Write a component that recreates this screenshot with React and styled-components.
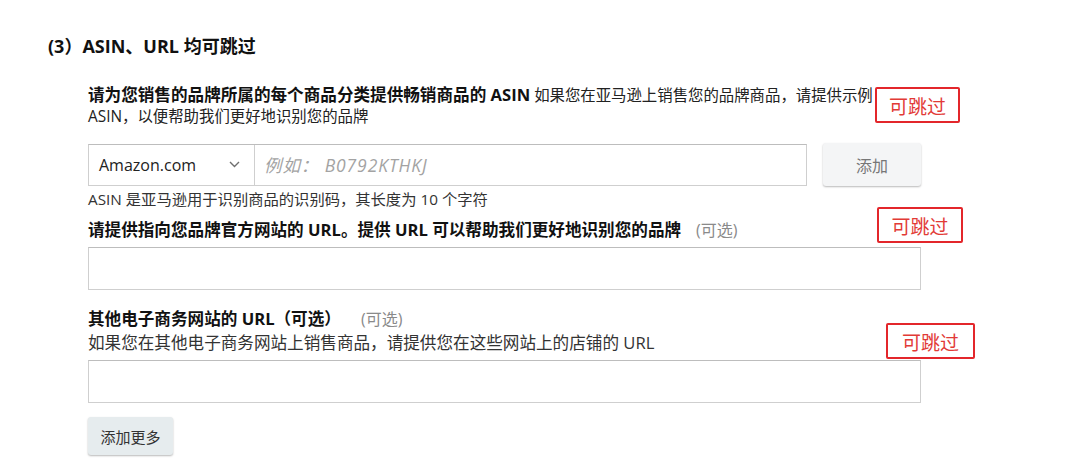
import React from "react";
import styled, { createGlobalStyle } from "styled-components";

const Global = createGlobalStyle`
  html, body { margin: 0; padding: 0; background: #fff; }
  body { font-family: "Open Sans", "Noto Sans CJK SC", sans-serif; color: #111; }
  * { box-sizing: border-box; }
`;

const Page = styled.div`
  padding: 34px 0 0 48px;
  width: 1080px;
  height: 465px;
  overflow: hidden;
`;

const Title = styled.h2`
  margin: 0;
  font-size: 18px;
  line-height: 24px;
  font-weight: 700;
  color: #111;
`;

const Form = styled.div`
  margin: 26px 0 0 40px;
  width: 833px;
  display: flex;
  flex-direction: column;
`;

const Section = styled.div`
  position: relative;
  display: flex;
  flex-direction: column;
  margin-top: ${(p) => p.$mt || 0}px;
`;

const Label = styled.div`
  font-size: ${(p) => p.$fs || 15.4}px;
  line-height: ${(p) => p.$lh || 22}px;
  color: #222;
  strong { font-weight: 700; color: #111; font-size: 16.6px; }
`;

const Optional = styled.span`
  color: #8a8a8a;
  font-size: 16px;
  margin-left: ${(p) => p.$ml}px;
`;

const Sub = styled.div`
  font-size: 16.6px;
  line-height: 23px;
  color: #333;
`;

const Helper = styled.div`
  margin-top: 3px;
  font-size: 15.3px;
  line-height: 20px;
  color: #333;
`;

const Row = styled.div`
  display: flex;
  align-items: center;
  margin-top: ${(p) => p.$mt}px;
`;

const Group = styled.div`
  display: flex;
  width: 720px;
  height: 42px;
  border: 1px solid #cfcfcf;
  border-top-color: #bdbdbd;
  background: #fff;
`;

const Select = styled.div`
  width: 166px;
  display: flex;
  align-items: center;
  justify-content: space-between;
  padding: 0 14px 0 10px;
  border-right: 1px solid #cfcfcf;
  font-size: 16px;
  color: #222;
`;

const Placeholder = styled.div`
  flex: 1;
  display: flex;
  align-items: center;
  padding-left: 9px;
  font-size: 17.5px;
  font-style: italic;
  color: #a3a3a3;
  letter-spacing: 0.9px;
`;

const GrayButton = styled.button`
  font-family: "Noto Sans CJK SC", sans-serif;
  border: none;
  border-radius: 3px;
  box-shadow: 0 1px 2px rgba(0, 0, 0, 0.28);
  background: ${(p) => p.$bg};
  color: ${(p) => p.$color};
  font-size: ${(p) => p.$fs}px;
  width: ${(p) => p.$w}px;
  height: ${(p) => p.$h}px;
  margin-left: ${(p) => p.$ml || 0}px;
  padding: 0;
`;

const TextInput = styled.div`
  width: 833px;
  height: 43px;
  border: 1px solid #cfcfcf;
  border-top-color: #bdbdbd;
  margin-top: ${(p) => p.$mt}px;
  background: #fff;
`;

const Badge = styled.div`
  position: absolute;
  left: ${(p) => p.$left}px;
  top: ${(p) => p.$top}px;
  width: ${(p) => p.$w}px;
  height: 36px;
  border: 2px solid #e3262b;
  border-radius: 2px;
  display: flex;
  align-items: center;
  justify-content: center;
  font-family: "Noto Sans CJK SC", sans-serif;
  font-size: 19px;
  color: #e23a36;
  background: #fff;
`;

const Chevron = () => (
  <svg width="11" height="7" viewBox="0 0 11 7">
    <polyline points="1,1 5.5,5.5 10,1" fill="none" stroke="#6f6f6f" strokeWidth="1.4" />
  </svg>
);

export default function App() {
  return (
    <Page>
      <Global />
      <Title>(3）ASIN、URL 均可跳过</Title>
      <Form>
        <Section>
          <Label $lh={21}>
            <strong>请为您销售的品牌所属的每个商品分类提供畅销商品的 ASIN</strong> 如果您在亚马逊上销售您的品牌商品，请提供示例 ASIN，以便帮助我们更好地识别您的品牌
          </Label>
          <Badge $left={787} $top={3} $w={85}>可跳过</Badge>
          <Row $mt={16}>
            <Group>
              <Select>
                <span>Amazon.com</span>
                <Chevron />
              </Select>
              <Placeholder>例如：&nbsp;B0792KTHKJ</Placeholder>
            </Group>
            <GrayButton $bg="#f4f5f6" $color="#777" $fs={16} $w={98} $h={43} $ml={16}>添加</GrayButton>
          </Row>
          <Helper>ASIN 是亚马逊用于识别商品的识别码，其长度为 10 个字符</Helper>
        </Section>
        <Section $mt={10}>
          <Label>
            <strong>请提供指向您品牌官方网站的 URL。提供 URL 可以帮助我们更好地识别您的品牌</strong>
            <Optional $ml={15}>(可选)</Optional>
          </Label>
          <Badge $left={789} $top={-12} $w={86}>可跳过</Badge>
          <TextInput $mt={5} />
        </Section>
        <Section $mt={17}>
          <Label $lh={23}>
            <strong>其他电子商务网站的 URL（可选）</strong>
            <Optional $ml={20}>(可选)</Optional>
          </Label>
          <Sub>如果您在其他电子商务网站上销售商品，请提供您在这些网站上的店铺的 URL</Sub>
          <Badge $left={798} $top={16} $w={89}>可跳过</Badge>
          <TextInput $mt={6} />
        </Section>
        <Row $mt={14}>
          <GrayButton $bg="#e6ecee" $color="#333" $fs={15} $w={85} $h={38}>添加更多</GrayButton>
        </Row>
      </Form>
    </Page>
  );
}
